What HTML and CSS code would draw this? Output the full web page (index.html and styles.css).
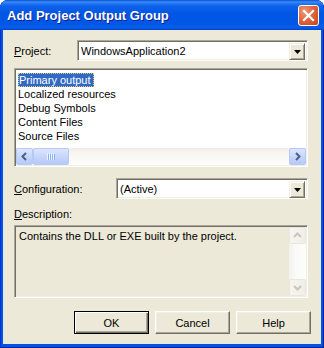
FILE: index.html
```html
<!DOCTYPE html>
<html>
<head>
<meta charset="utf-8">
<link rel="stylesheet" href="styles.css">
</head>
<body>
<div class="window">
  <div class="titlebar">
    <span class="title">Add Project Output Group</span>
    <div class="close">
      <svg width="13" height="13" viewBox="0 0 13 13"><path d="M2 2 L11 11 M11 2 L2 11" stroke="#fff" stroke-width="2.2" stroke-linecap="square"/></svg>
    </div>
  </div>
  <div class="client">
    <div class="row project">
      <span class="label"><span class="key">P</span>roject:</span>
      <div class="combo">
        <span class="combo-value">WindowsApplication2</span>
        <span class="combo-btn"><svg width="7" height="4" viewBox="0 0 7 4"><path d="M0 0 H7 L3.5 4 Z" fill="#000"/></svg></span>
      </div>
    </div>
    <div class="listbox">
      <ul class="items">
        <li><span class="sel">Primary output</span></li>
        <li>Localized resources</li>
        <li>Debug Symbols</li>
        <li>Content Files</li>
        <li>Source Files</li>
      </ul>
      <div class="hscroll">
        <span class="sbtn"><svg width="15" height="15" viewBox="0 0 15 15"><path d="M9 4 L5.5 7.5 L9 11" fill="none" stroke="#4D6185" stroke-width="2"/></svg></span>
        <span class="thumb"><svg width="8" height="7" viewBox="0 0 8 7"><path d="M0.5 0V7M2.5 0V7M4.5 0V7M6.5 0V7" stroke="#EEF4FE" stroke-width="1"/><path d="M1.5 1V8M3.5 1V8M5.5 1V8M7.5 1V8" stroke="#8CB0F8" stroke-width="1"/></svg></span>
        <span class="track"></span>
        <span class="sbtn"><svg width="15" height="15" viewBox="0 0 15 15"><path d="M6 4 L9.5 7.5 L6 11" fill="none" stroke="#4D6185" stroke-width="2"/></svg></span>
      </div>
    </div>
    <div class="row config">
      <span class="label"><span class="key">C</span>onfiguration:</span>
      <div class="combo">
        <span class="combo-value">(Active)</span>
        <span class="combo-btn"><svg width="7" height="4" viewBox="0 0 7 4"><path d="M0 0 H7 L3.5 4 Z" fill="#000"/></svg></span>
      </div>
    </div>
    <div class="desc-label"><span class="key">D</span>escription:</div>
    <div class="descbox">
      <p class="desc-text">Contains the DLL or EXE built by the project.</p>
      <div class="vscroll">
        <span class="sbtn off"><svg width="15" height="15" viewBox="0 0 15 15"><path d="M4 9 L7.5 5.5 L11 9" fill="none" stroke="#C9C7BA" stroke-width="2"/></svg></span>
        <span class="vtrack"></span>
        <span class="sbtn off"><svg width="15" height="15" viewBox="0 0 15 15"><path d="M4 6 L7.5 9.5 L11 6" fill="none" stroke="#C9C7BA" stroke-width="2"/></svg></span>
      </div>
    </div>
    <div class="buttons">
      <button class="btn default">OK</button>
      <button class="btn">Cancel</button>
      <button class="btn">Help</button>
    </div>
  </div>
</div>
</body>
</html>
```
FILE: styles.css
```css
* { box-sizing: border-box; }
body {
  margin: 0;
  background: #fff;
  font-family: "Liberation Sans", Arial, sans-serif;
  font-size: 11px;
  color: #000;
}
.window {
  width: 324px;
  height: 348px;
  background: #0054E3;
  border-radius: 8px 8px 0 0;
  display: flex;
  flex-direction: column;
  overflow: hidden;
  box-shadow: inset 1px 0 0 #0831D9, inset -1px 0 0 #001EA0, inset 0 -1px 0 #001EA0;
}
.titlebar {
  height: 30px;
  flex: none;
  display: flex;
  align-items: center;
  justify-content: space-between;
  padding: 1px 5px 0 7px;
  border-radius: 8px 8px 0 0;
  background: linear-gradient(180deg, #0A4FD6 0px, #3C8EF7 2px, #2A7BF3 3px, #0D62EA 6px, #0056E4 14px, #0056E6 24px, #0A5FEA 27px, #0050DA 29px, #0045C8 30px);
}
.title {
  color: #fff;
  font-weight: bold;
  font-size: 13px;
  text-shadow: 1px 1px 0 #0F1F8F;
}
.close {
  width: 21px;
  height: 21px;
  border: 1px solid #fff;
  border-radius: 3px;
  background: radial-gradient(circle at 30% 30%, #EE9A7E 0, #E0673F 45%, #C9401C 100%);
  display: flex;
  align-items: center;
  justify-content: center;
  margin-top: -1px;
}
.client {
  flex: 1;
  margin: 0 3px 4px;
  background: #ECE9D8;
  padding: 10px 13px 0 11px;
  display: flex;
  flex-direction: column;
}
.key { text-decoration: underline; }
.row {
  display: flex;
  align-items: center;
  height: 21px;
  flex: none;
}
.row.config { margin-top: 11px; }
.combo {
  margin-left: auto;
  height: 21px;
  display: flex;
  align-items: stretch;
  background: #fff;
  border: 1px solid;
  border-color: #ACA899 #fff #fff #ACA899;
  box-shadow: inset 1px 1px 0 #716F64, inset -1px -1px 0 #F1EFE2;
  padding: 2px;
}
.project .combo { width: 231px; }
.config .combo { width: 192px; }
.combo-value {
  flex: 1;
  padding-left: 1px;
  line-height: 17px;
}
.combo-btn {
  width: 16px;
  height: 17px;
  background: #ECE9D8;
  border: 1px solid;
  border-color: #F1EFE2 #716F64 #716F64 #F1EFE2;
  box-shadow: inset 1px 1px 0 #fff, inset -1px -1px 0 #ACA899;
  display: flex;
  align-items: center;
  justify-content: center;
}
.listbox {
  margin-top: 7px;
  height: 99px;
  flex: none;
  background: #fff;
  border: 1px solid;
  border-color: #ACA899 #fff #fff #ACA899;
  box-shadow: inset 1px 1px 0 #716F64, inset -1px -1px 0 #F1EFE2;
  padding: 1px;
  display: flex;
  flex-direction: column;
}
.items {
  list-style: none;
  margin: 0;
  padding: 3px 0 0 0;
  flex: 1;
}
.items li {
  line-height: 14px;
  height: 14px;
  padding-left: 2px;
  white-space: nowrap;
}
.sel {
  display: inline-block;
  background: #316AC5;
  color: #fff;
  padding: 0 3px 0 1px;
  outline: 1px dotted #D8C870;
  outline-offset: -1px;
}
.hscroll {
  height: 17px;
  display: flex;
  background: linear-gradient(180deg, #EEEDE5 0, #F7F6F1 30%, #FDFDFB 100%);
}
.sbtn {
  width: 17px;
  height: 17px;
  flex: none;
  border: 1px solid #B5C8F7;
  border-radius: 2px;
  background: linear-gradient(180deg, #DCE6FD 0, #C6D6FC 50%, #B6CAF8 100%);
  display: flex;
  align-items: center;
  justify-content: center;
}
.thumb {
  width: 36px;
  height: 17px;
  flex: none;
  border: 1px solid #B5C8F7;
  border-radius: 2px;
  background: linear-gradient(180deg, #DCE6FD 0, #C6D6FC 50%, #B6CAF8 100%);
  display: flex;
  align-items: center;
  justify-content: center;
}
.track { flex: 1; }
.desc-label {
  margin-top: 9px;
  line-height: 13px;
  height: 13px;
  flex: none;
}
.descbox {
  margin-top: 4px;
  height: 73px;
  flex: none;
  background: #ECE9D8;
  border: 1px solid;
  border-color: #ACA899 #fff #fff #ACA899;
  box-shadow: inset 1px 1px 0 #716F64, inset -1px -1px 0 #F1EFE2;
  padding: 1px;
  display: flex;
}
.desc-text {
  flex: 1;
  margin: 0;
  padding: 3px 3px 0 3px;
  line-height: 13px;
}
.vscroll {
  width: 17px;
  display: flex;
  flex-direction: column;
  background: linear-gradient(90deg, #F3F2EC 0, #FAFAF7 40%, #FDFDFB 100%);
}
.sbtn.off {
  border-color: #E8E7DE;
  background: linear-gradient(90deg, #F6F5F0 0, #EFEEE7 100%);
}
.vtrack { flex: 1; }
.buttons {
  margin-top: 13px;
  margin-right: -3px;
  display: flex;
  justify-content: flex-end;
  gap: 6px;
}
.btn {
  width: 75px;
  height: 23px;
  padding: 0;
  font-family: "Liberation Sans", Arial, sans-serif;
  font-size: 11px;
  color: #000;
  background: #ECE9D8;
  border: 1px solid;
  border-color: #fff #716F64 #716F64 #fff;
  box-shadow: inset -1px -1px 0 #ACA899, inset 1px 1px 0 #F1EFE2;
}
.btn.default {
  border: 1px solid #000;
  box-shadow: inset 1px 1px 0 #fff, inset -1px -1px 0 #716F64, inset -2px -2px 0 #ACA899;
}
```
